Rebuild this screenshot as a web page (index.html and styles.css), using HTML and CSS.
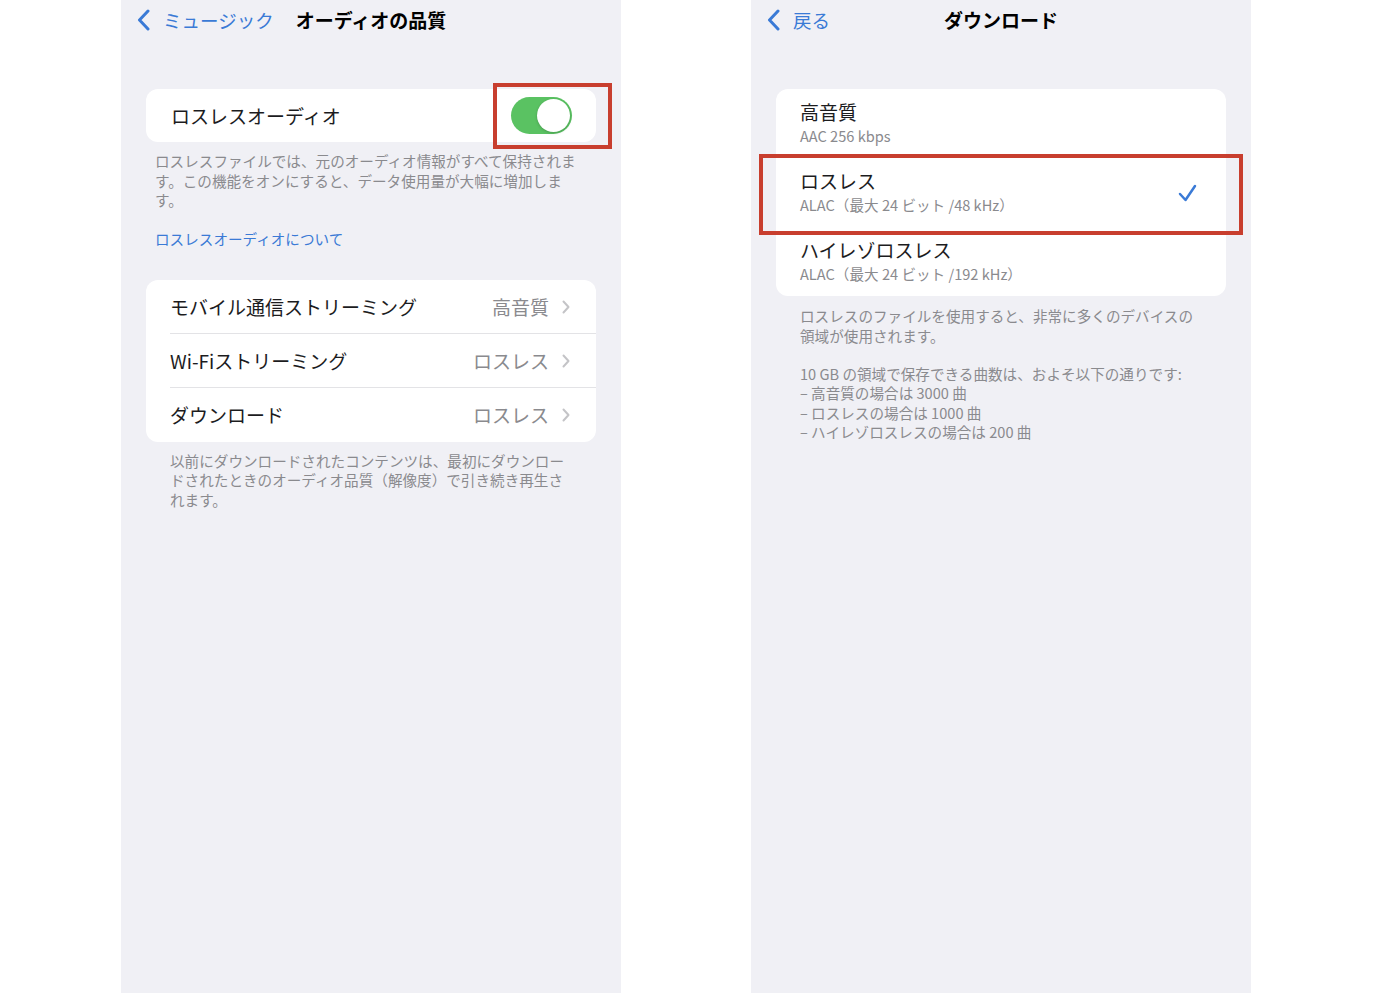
FILE: index.html
```html
<!DOCTYPE html>
<html lang="ja">
  <head>
    <meta charset="UTF-8" />
    <meta name="viewport" content="width=device-width, initial-scale=1.0" />
    <title>オーディオの品質</title>
    <link rel="stylesheet" href="styles.css">
  </head>
  <body>
    <div class="screens">
      <!-- Settings > Music > Audio quality -->
      <div class="phone">
        <div class="navbar">
          <a class="back">
            <svg class="back-icon" viewBox="0 0 13 22"><path d="M11 2 L2.5 11 L11 20" /></svg>
            <span>ミュージック</span>
          </a>
          <h1 class="nav-title">オーディオの品質</h1>
          <span></span>
        </div>

        <div class="group first-group">
          <div class="toggle-row">
            <span class="row-label">ロスレスオーディオ</span>
            <span class="toggle-wrap">
              <span class="toggle on"><span class="knob"></span></span>
              <span class="highlight highlight-toggle"></span>
            </span>
          </div>
        </div>
        <p class="footer footer-wide">ロスレスファイルでは、元のオーディオ情報がすべて保持されます。この機能をオンにすると、データ使用量が大幅に増加します。</p>
        <p class="footer-link">ロスレスオーディオについて</p>

        <div class="group list-group">
          <div class="row">
            <div class="row-inner">
              <span class="row-label">モバイル通信ストリーミング</span>
              <span class="row-value">高音質</span>
              <svg class="disclosure" viewBox="0 0 8 14"><path d="M1.5 1.5 L6.5 7 L1.5 12.5" /></svg>
            </div>
          </div>
          <div class="row">
            <div class="row-inner">
              <span class="row-label">Wi-Fiストリーミング</span>
              <span class="row-value">ロスレス</span>
              <svg class="disclosure" viewBox="0 0 8 14"><path d="M1.5 1.5 L6.5 7 L1.5 12.5" /></svg>
            </div>
          </div>
          <div class="row">
            <div class="row-inner">
              <span class="row-label">ダウンロード</span>
              <span class="row-value">ロスレス</span>
              <svg class="disclosure" viewBox="0 0 8 14"><path d="M1.5 1.5 L6.5 7 L1.5 12.5" /></svg>
            </div>
          </div>
        </div>
        <p class="footer footer-narrow">以前にダウンロードされたコンテンツは、最初にダウンロードされたときのオーディオ品質（解像度）で引き続き再生されます。</p>
      </div>

      <!-- Download quality picker -->
      <div class="phone">
        <div class="navbar">
          <a class="back">
            <svg class="back-icon" viewBox="0 0 13 22"><path d="M11 2 L2.5 11 L11 20" /></svg>
            <span>戻る</span>
          </a>
          <h1 class="nav-title">ダウンロード</h1>
          <span></span>
        </div>

        <div class="group first-group">
          <div class="option">
            <div class="option-inner">
              <div class="option-text">
                <span class="row-label">高音質</span>
                <span class="option-sub">AAC 256 kbps</span>
              </div>
            </div>
          </div>
          <div class="option selected">
            <div class="option-inner">
              <div class="option-text">
                <span class="row-label">ロスレス</span>
                <span class="option-sub">ALAC（最大 24 ビット /48 kHz）</span>
              </div>
              <svg class="check" viewBox="0 0 19 18"><path d="M2 10 L7.5 16 L17 2" /></svg>
            </div>
            <span class="highlight highlight-option"></span>
          </div>
          <div class="option">
            <div class="option-inner">
              <div class="option-text">
                <span class="row-label">ハイレゾロスレス</span>
                <span class="option-sub">ALAC（最大 24 ビット /192 kHz）</span>
              </div>
            </div>
          </div>
        </div>
        <p class="footer footer-narrow footer-top">ロスレスのファイルを使用すると、非常に多くのデバイスの領域が使用されます。</p>
        <p class="footer footer-narrow footer-para">10 GB の領域で保存できる曲数は、およそ以下の通りです:<br>– 高音質の場合は 3000 曲<br>– ロスレスの場合は 1000 曲<br>– ハイレゾロスレスの場合は 200 曲</p>
      </div>
    </div>
  </body>
</html>
```

FILE: styles.css
```css
* {
  box-sizing: border-box;
  margin: 0;
  padding: 0;
}

body {
  background: #fff;
  font-family: "Noto Sans CJK JP", "Noto Sans", sans-serif;
  color: #1c1c1e;
}

.screens {
  display: flex;
  gap: 130px;
  padding-left: 121px;
}

.phone {
  width: 500px;
  height: 993px;
  background: #f0f0f5;
  overflow: hidden;
}

/* NAV BAR */

.navbar {
  display: grid;
  grid-template-columns: 1fr auto 1fr;
  align-items: center;
  height: 40px;
  padding: 0 16px;
}

.back {
  display: flex;
  align-items: center;
  gap: 13px;
  color: #3a7ad6;
  font-size: 18.5px;
  line-height: 24px;
}

.back-icon {
  width: 13px;
  height: 22px;
  fill: none;
  stroke: #3a7ad6;
  stroke-width: 3;
  stroke-linecap: round;
  stroke-linejoin: round;
}

.nav-title {
  font-size: 19px;
  font-weight: 700;
  color: #000;
  line-height: 24px;
}

/* GROUPS */

.group {
  margin: 0 25px;
  background: #fff;
  border-radius: 12px;
}

.first-group {
  margin-top: 49px;
}

.list-group {
  margin-top: 31px;
}

.row-label {
  font-size: 19px;
  line-height: 24px;
}

.toggle-row {
  display: flex;
  align-items: center;
  justify-content: space-between;
  height: 53px;
  padding: 0 24px 0 25px;
}

.toggle-wrap {
  position: relative;
  display: flex;
}

.toggle {
  display: flex;
  align-items: center;
  width: 61px;
  height: 37px;
  padding: 2px;
  border-radius: 19px;
  background: #e6e6ea;
}

.toggle.on {
  background: #5ac262;
  justify-content: flex-end;
}

.knob {
  width: 33px;
  height: 33px;
  border-radius: 50%;
  background: #fff;
  box-shadow: 0 1px 3px rgba(0, 0, 0, 0.2);
}

.row {
  padding-left: 24px;
}

.row-inner {
  display: flex;
  align-items: center;
  height: 54px;
  padding-right: 26px;
  padding-top: 1px;
  border-bottom: 1px solid #e3e3e6;
}

.row:last-child .row-inner {
  border-bottom: none;
}

.row-inner .row-label {
  flex: 1;
}

.row-value {
  font-size: 19px;
  line-height: 24px;
  color: #8a8a8e;
  margin-right: 13px;
}

.disclosure {
  width: 8px;
  height: 14px;
  fill: none;
  stroke: #c4c4c7;
  stroke-width: 2;
  stroke-linecap: round;
  stroke-linejoin: round;
}

/* OPTION LIST */

.option {
  position: relative;
  padding-left: 24px;
}

.option-inner {
  display: flex;
  align-items: center;
  height: 69px;
  padding: 11px 29px 10px 0;
}

.option-text {
  display: flex;
  flex-direction: column;
  flex: 1;
  align-self: flex-start;
}

.option-sub {
  font-size: 14.6px;
  line-height: 24px;
  color: #8a8a8e;
}

.check {
  width: 19px;
  height: 18px;
  fill: none;
  stroke: #3a7ad6;
  stroke-width: 2.5;
  stroke-linecap: round;
  stroke-linejoin: round;
}

/* FOOTERS */

.footer {
  font-size: 14.6px;
  line-height: 19.5px;
  color: #8a8a8e;
}

.footer-wide {
  padding: 9px 34px 0;
}

.footer-narrow {
  padding: 9px 49px 0;
}

.footer-top {
  padding-top: 10px;
}

.footer-para {
  padding-top: 0;
  margin-top: 19px;
  line-height: 19.3px;
}

.footer-link {
  margin-top: 19.5px;
  padding: 0 34px;
  font-size: 14.6px;
  line-height: 19.5px;
  color: #3a7ad6;
}

/* ANNOTATION BOXES */

.highlight {
  position: absolute;
  border: 4px solid #c83e2e;
  pointer-events: none;
}

.highlight-toggle {
  top: -14px;
  bottom: -15px;
  left: -18px;
  right: -40px;
}

.highlight-option {
  top: -4px;
  bottom: -8px;
  left: -17px;
  right: -17px;
}
```
